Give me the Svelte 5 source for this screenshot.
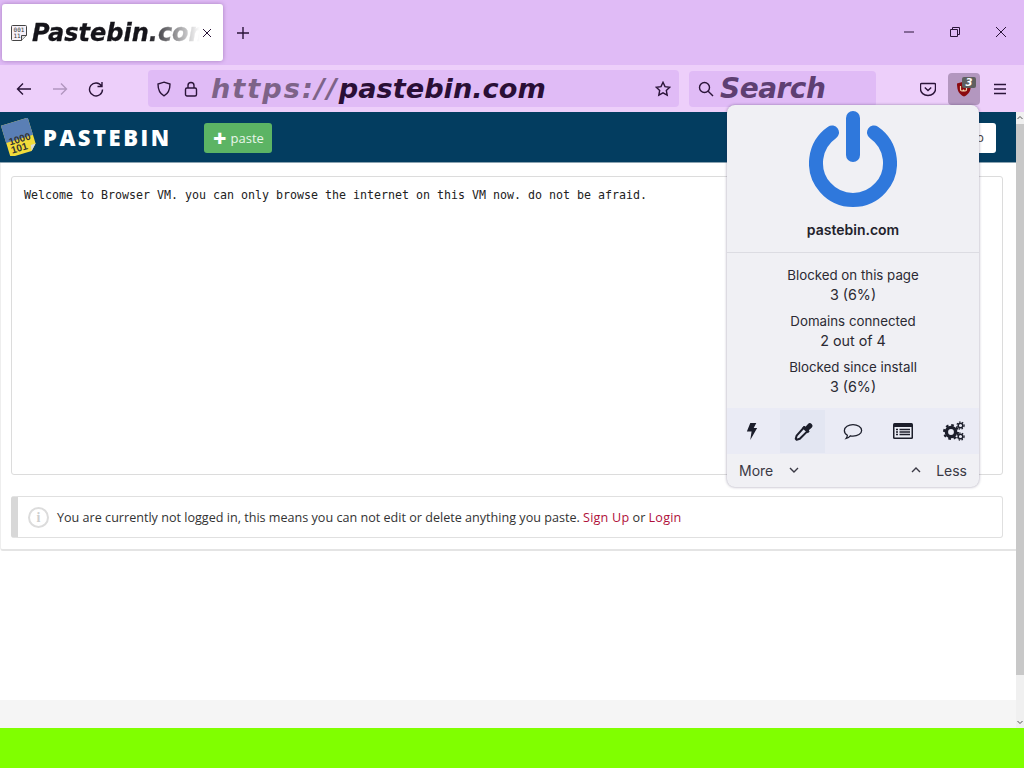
<script>
	const stats = [
		{ label: 'Blocked on this page', value: '3 (6%)' },
		{ label: 'Domains connected', value: '2 out of 4' },
		{ label: 'Blocked since install', value: '3 (6%)' }
	];
</script>

<div class="screen">
	<div class="browser">
		<div class="tabbar">
			<div class="tab">
				<svg class="favicon" viewBox="0 0 16 16" width="16" height="16">
					<path d="M.5 1.500a1 1 0 0 1 1-1h13a1 1 0 0 1 1 1v9l-5 5h-9a1 1 0 0 1-1-1z" fill="#f6f1f8" stroke="#444" />
					<path d="M10.500 15.500v-5h5" fill="#ddd" stroke="#444" />
					<text x="8" y="6.500" text-anchor="middle" class="fav-text">001</text>
					<text x="6" y="13" text-anchor="middle" class="fav-text">11</text>
				</svg>
				<span class="tab-title">Pastebin.com</span>
				<svg class="tab-close" viewBox="0 0 10 10" width="10" height="10"><path d="M1 1l8 8M9 1l-8 8" /></svg>
			</div>
			<svg class="newtab" viewBox="0 0 12 12" width="12" height="12"><path d="M6 0v12M0 6h12" /></svg>
			<div class="window-btns">
				<svg viewBox="0 0 10 10" width="10" height="10"><path d="M0 5h10" /></svg>
				<svg viewBox="0 0 10 10" width="10" height="10"><path d="M.5 2.500h7v7h-7zM2.500 2.500v-2h7v7h-2" /></svg>
				<svg viewBox="0 0 10 10" width="10" height="10"><path d="M0 0l10 10M10 0L0 10" /></svg>
			</div>
		</div>

		<div class="toolbar">
			<svg class="tool" viewBox="0 0 16 16" width="16" height="16"><path d="M15 8H1.500M7 2.500L1.500 8 7 13.500" /></svg>
			<svg class="tool dim" viewBox="0 0 16 16" width="16" height="16"><path d="M1 8h13.500M9 2.500L14.500 8 9 13.500" /></svg>
			<svg class="tool" viewBox="0 0 16 16" width="16" height="16"><path d="M13.500 5A6.500 6.500 0 1 0 14.500 8.500M14 1v4.500H9.500" /></svg>
			<div class="urlbar">
				<svg class="tool" viewBox="0 0 16 16" width="16" height="16"><path d="M8 1.200L14 3c0 6-1.500 9.500-6 11.800C3.500 12.500 2 9 2 3z" /></svg>
				<svg class="tool" viewBox="0 0 14 16" width="14" height="16"><rect x="1.500" y="7" width="11" height="8" rx="1.500" /><path d="M4 7V4.500a3 3 0 0 1 6 0V7" /></svg>
				<span class="url"><span class="scheme">https://</span>pastebin.com</span>
				<svg class="tool star" viewBox="0 0 16 16" width="16" height="16"><path d="M8 1.300l2 4.300 4.700.6-3.400 3.200.9 4.700L8 11.800l-4.200 2.300.9-4.700L1.300 6.200 6 5.600z" /></svg>
			</div>
			<div class="searchbar">
				<svg class="tool" viewBox="0 0 16 16" width="16" height="16"><circle cx="6.500" cy="6.500" r="5" /><path d="M10.200 10.200L15 15" /></svg>
				<span class="search-text">Search</span>
			</div>
			<svg class="tool pocket" viewBox="0 0 16 16" width="16" height="16"><path d="M1.500 2.500h13a1 1 0 0 1 1 1V8a7.500 6.500 0 0 1-15 0V3.500a1 1 0 0 1 1-1z" /><path d="M4.800 6.500L8 9.500l3.200-3" /></svg>
			<div class="ublock">
				<svg viewBox="0 0 16 16" width="16" height="16"><path d="M8 .5l7 2c0 7-2 11-7 13-5-2-7-6-7-13z" fill="#8b0a0f" /><path d="M4.500 5v3.500a1.500 1.500 0 0 0 3 0 1.500 1.500 0 0 0 3 0V5.500" fill="none" stroke="#f4d9b0" stroke-width="1.200" /></svg>
				<span class="badge">3</span>
			</div>
			<svg class="tool menu" viewBox="0 0 14 12" width="14" height="12"><path d="M1 1.500h12M1 6h12M1 10.500h12" /></svg>
		</div>
	</div>

	<div class="page">
		<div class="scroll-area">
			<header class="site-header">
				<svg class="logo" viewBox="0 0 38 38" width="38" height="38">
					<g transform="rotate(-17 19 19)">
						<path d="M5 3h28v27l-6 6H5z" fill="#f2db3a" />
						<path d="M5 3h28v18H5z" fill="#5a7fb5" />
						<text x="19" y="24.500" text-anchor="middle" class="logo-num">1000</text>
						<text x="16" y="33" text-anchor="middle" class="logo-num">101</text>
						<path d="M27 36l1-6 5 0z" fill="#d8d8d8" />
					</g>
				</svg>
				<span class="wordmark">PASTEBIN</span>
				<div class="paste-btn"><span class="plus">+</span> paste</div>
				<div class="login-btn">p</div>
			</header>

			<main class="content">
				<div class="paste-box">Welcome to Browser VM. you can only browse the internet on this VM now. do not be afraid.</div>
				<div class="notice">
					<span class="info">i</span>
					<span>You are currently not logged in, this means you can not edit or delete anything you paste. <a href="#a">Sign Up</a> or <a href="#a">Login</a></span>
				</div>
			</main>
			<div class="spacer"></div>
			<div class="footer"></div>
		</div>
		<div class="scrollbar">
			<svg viewBox="0 0 8 8" width="8" height="8"><path d="M1.500 5L4 2.500 6.500 5" /></svg>
			<div class="thumb"></div>
			<svg viewBox="0 0 8 8" width="8" height="8"><path d="M1.500 3L4 5.500 6.500 3" /></svg>
		</div>
	</div>

	<div class="greenbar"></div>

	<div class="popup">
		<svg class="power" viewBox="0 0 88 103" width="88" height="103">
			<path d="M23 27.500A37 37 0 1 0 65 27.500" fill="none" stroke="#2f78dc" stroke-width="14" stroke-linecap="round" />
			<path d="M44 13v37" fill="none" stroke="#2f78dc" stroke-width="14" stroke-linecap="round" />
		</svg>
		<div class="hostname">pastebin.com</div>
		<div class="stats">
			{#each stats as s}
				<div class="stat">
					<div class="stat-label">{s.label}</div>
					<div class="stat-value">{s.value}</div>
				</div>
			{/each}
		</div>
		<div class="tools">
			<div class="tool-cell">
				<svg viewBox="0 0 14 22" width="12" height="19"><path d="M5 1l7 0-3 6 4 0L5 21l1.500-10L1 11z" fill="#1c1e2b" /></svg>
			</div>
			<div class="tool-cell active">
				<svg viewBox="0 0 22 22" width="20" height="20">
					<path d="M12.500 5.500l4 4-9 9-3.500 1-1-1 1-3.500z" fill="none" stroke="#1c1e2b" stroke-width="2.200" stroke-linejoin="round" />
					<path d="M10 6.500l2-2 1.500 1 3-3.300a2.800 2.800 0 0 1 4 4L17.300 9l1 1.500-2 2z" fill="#1c1e2b" />
				</svg>
			</div>
			<div class="tool-cell">
				<svg viewBox="0 0 22 18" width="20" height="17"><path d="M11 1.500c5 0 9.500 2.700 9.500 6.300S16 14 11 14c-1 0-2 0-3-.3-1 1.300-2.500 2.300-4.500 2.800.8-1 1.200-2 1.300-3.300C2.800 12 1.500 10 1.500 7.800 1.500 4.200 6 1.500 11 1.500z" fill="none" stroke="#1c1e2b" stroke-width="1.400" /></svg>
			</div>
			<div class="tool-cell">
				<svg viewBox="0 0 20 16" width="20" height="16">
					<rect width="20" height="16" rx="1.500" fill="#1c1e2b" />
					<rect x="1.500" y="4" width="17" height="10.500" fill="#eceef6" />
					<path d="M3 6.500h2M6.500 6.500h10.500M3 9h2M6.500 9h10.500M3 11.500h2M6.500 11.500h10.500" stroke="#1c1e2b" stroke-width="1.300" />
				</svg>
			</div>
			<div class="tool-cell">
				<svg viewBox="0 0 22 20" width="22" height="20">
					<circle cx="8" cy="11" r="4.600" fill="none" stroke="#1c1e2b" stroke-width="3.400" />
					<circle cx="8" cy="11" r="7" fill="none" stroke="#1c1e2b" stroke-width="2" stroke-dasharray="2.700 2.800" />
					<circle cx="17.500" cy="4.500" r="2.300" fill="none" stroke="#1c1e2b" stroke-width="1.500" />
					<circle cx="17.500" cy="4.500" r="3.600" fill="none" stroke="#1c1e2b" stroke-width="1.200" stroke-dasharray="1.500 1.500" />
					<circle cx="17.500" cy="15.500" r="2.300" fill="none" stroke="#1c1e2b" stroke-width="1.500" />
					<circle cx="17.500" cy="15.500" r="3.600" fill="none" stroke="#1c1e2b" stroke-width="1.200" stroke-dasharray="1.500 1.500" />
				</svg>
			</div>
		</div>
		<div class="more-less">
			<span>More</span>
			<svg class="chev first" viewBox="0 0 10 6" width="10" height="6"><path d="M1 1l4 4 4-4" /></svg>
			<svg class="chev last" viewBox="0 0 10 6" width="10" height="6"><path d="M1 5l4-4 4 4" /></svg>
			<span>Less</span>
		</div>
	</div>
</div>

<style>
	:global(body) {
		margin: 0;
		overflow: hidden;
	}

	.screen {
		position: relative;
		width: 1024px;
		height: 768px;
		display: flex;
		flex-direction: column;
		overflow: hidden;
		font-family: "Open Sans", sans-serif;
	}

	.browser {
		flex: none;
		color: #1f0a30;
	}

	.tabbar {
		height: 65px;
		background: #e0bbf6;
		display: flex;
		align-items: flex-start;
		box-sizing: border-box;
		padding: 4px 0 0 2px;
	}

	.tab {
		width: 221px;
		height: 57px;
		background: #fff;
		border-radius: 3px;
		box-shadow: 0 0 4px rgba(60, 20, 90, 0.35);
		display: flex;
		align-items: center;
		box-sizing: border-box;
		padding: 0 0 0 9px;
	}

	.favicon {
		flex: none;
	}

	.fav-text {
		font-family: "DejaVu Sans Mono", monospace;
		font-size: 6px;
		fill: #333;
	}

	.tab-title {
		font-family: "DejaVu Sans", sans-serif;
		font-weight: 700;
		font-style: italic;
		font-size: 24px;
		-webkit-text-stroke: 0.3px #15141a;
		margin-left: 5px;
		width: 168px;
		overflow: hidden;
		white-space: nowrap;
		color: #15141a;
		mask-image: linear-gradient(to right, #000 68%, transparent 100%);
	}

	.tab-close {
		flex: none;
		margin-left: 2px;
	}

	.tab-close path,
	.newtab path,
	.window-btns path {
		fill: none;
		stroke: #2a1438;
		stroke-width: 1;
	}

	.newtab {
		margin: 23px 0 0 14px;
		flex: none;
	}

	.newtab path {
		stroke-width: 1.400;
	}

	.window-btns {
		margin-left: auto;
		display: flex;
		gap: 36px;
		padding: 23px 18px 0 0;
	}

	.toolbar {
		height: 47px;
		background: #edcffa;
		display: flex;
		align-items: center;
		box-sizing: border-box;
		padding: 0 0 0 16px;
	}

	.tool {
		flex: none;
	}

	.tool path,
	.tool rect,
	.tool circle {
		fill: none;
		stroke: #2a1438;
		stroke-width: 1.400;
	}

	.tool.dim {
		opacity: 0.3;
		margin-left: 20px;
	}

	.tool.dim + .tool {
		margin-left: 20px;
	}

	.urlbar {
		margin-left: 44px;
		width: 531px;
		height: 37px;
		background: #e0bbf6;
		border-radius: 4px;
		display: flex;
		align-items: center;
		box-sizing: border-box;
		padding: 0 8px;
		flex: none;
	}

	.urlbar .tool + .tool {
		margin-left: 12px;
	}

	.url {
		font-family: "DejaVu Sans", sans-serif;
		font-weight: 700;
		font-style: italic;
		font-size: 27.200px;
		margin-left: 13px;
		color: #2a0f36;
		white-space: nowrap;
	}

	.scheme {
		color: #7d6388;
		letter-spacing: 2px;
	}

	.urlbar .star {
		margin-left: auto;
	}

	.searchbar {
		margin-left: 10px;
		width: 187px;
		height: 36px;
		background: #e0bbf6;
		border-radius: 4px;
		display: flex;
		align-items: center;
		box-sizing: border-box;
		padding: 0 9px;
		flex: none;
	}

	.search-text {
		font-family: "DejaVu Sans", sans-serif;
		font-weight: 700;
		font-style: italic;
		font-size: 28px;
		margin-left: 6px;
		color: #5e3f72;
		letter-spacing: -0.5px;
	}

	.pocket {
		margin-left: 44px;
	}

	.ublock {
		margin-left: 12px;
		width: 32px;
		height: 32px;
		flex: none;
		background: #b397bf;
		border-radius: 4px;
		display: flex;
		align-items: center;
		justify-content: center;
		position: relative;
	}

	.badge {
		position: absolute;
		top: 4px;
		right: 4px;
		width: 14px;
		height: 11px;
		background: #5f5f5f;
		border-radius: 2px;
		color: #fff;
		font-family: "DejaVu Sans", sans-serif;
		font-weight: 700;
		font-style: italic;
		font-size: 10px;
		line-height: 11px;
		text-align: center;
	}

	.menu {
		margin-left: 13px;
	}

	.page {
		flex: 1;
		display: flex;
		min-height: 0;
		background: #fff;
	}

	.scroll-area {
		flex: 1;
		display: flex;
		flex-direction: column;
		min-width: 0;
	}

	.site-header {
		height: 50px;
		flex: none;
		background: #033d60;
		border-bottom: 1px solid #8ba3b1;
		display: flex;
		align-items: center;
		position: relative;
	}

	.logo {
		flex: none;
	}

	.logo-num {
		font-family: "Liberation Sans", sans-serif;
		font-weight: 700;
		font-size: 10px;
		fill: #333;
	}

	.wordmark {
		font-family: "Open Sans", sans-serif;
		font-weight: 800;
		font-size: 22px;
		letter-spacing: 2.500px;
		color: #fff;
		margin-left: 5px;
	}

	.paste-btn {
		margin-left: 33px;
		margin-top: 2px;
		width: 68px;
		height: 30px;
		background: #5cb464;
		border-radius: 3px;
		color: #e9f6ea;
		font-size: 13px;
		display: flex;
		align-items: center;
		justify-content: center;
		gap: 4px;
		box-sizing: border-box;
	}

	.plus {
		font-weight: 800;
		font-size: 23px;
		line-height: 20px;
		color: #fff;
	}

	.login-btn {
		position: absolute;
		right: 20px;
		top: 11px;
		width: 40px;
		height: 30px;
		background: #fff;
		border-radius: 3px;
		color: #444;
		font-size: 13px;
		line-height: 28px;
		text-align: right;
		box-sizing: border-box;
		padding-right: 12px;
	}

	.content {
		flex: none;
		height: 388px;
		box-sizing: border-box;
		padding: 13px 13px 0 10px;
		border-bottom: 2px solid #e4e4e4;
		border-left: 1px solid #eee;
		border-radius: 0 0 0 3px;
		display: flex;
		flex-direction: column;
		gap: 21px;
	}

	.paste-box {
		height: 299px;
		flex: none;
		box-sizing: border-box;
		border: 1px solid #dcdcdc;
		border-radius: 3px;
		padding: 11px 12px;
		font-family: "DejaVu Sans Mono", monospace;
		font-size: 11.630px;
		line-height: 15px;
		color: #222;
	}

	.notice {
		height: 42px;
		flex: none;
		box-sizing: border-box;
		border: 1px solid #e0e0e0;
		border-left: 7px solid #d8d8d8;
		border-radius: 3px;
		display: flex;
		align-items: center;
		padding-left: 10px;
		gap: 8px;
		font-size: 12.600px;
		color: #333;
		white-space: nowrap;
	}

	.notice a {
		color: #b0103a;
		text-decoration: none;
		letter-spacing: 0.2px;
	}

	.info {
		width: 17px;
		height: 17px;
		flex: none;
		border: 2px solid #dcdcdc;
		border-radius: 50%;
		color: #cfcfcf;
		font-family: "Liberation Serif", serif;
		font-weight: 700;
		font-size: 14px;
		line-height: 17px;
		text-align: center;
	}

	.spacer {
		flex: 1;
	}

	.footer {
		height: 28px;
		flex: none;
		background: #f5f5f5;
	}

	.scrollbar {
		width: 8px;
		flex: none;
		background: #f0f0f0;
		display: flex;
		flex-direction: column;
	}

	.scrollbar svg {
		flex: none;
		margin: 2px 0;
	}

	.scrollbar path {
		fill: none;
		stroke: #555;
		stroke-width: 1;
	}

	.thumb {
		height: 551px;
		background: #c8c8c8;
		margin-bottom: auto;
	}

	.greenbar {
		height: 40px;
		flex: none;
		background: #80ff00;
	}

	.popup {
		position: absolute;
		left: 727px;
		top: 105px;
		width: 252px;
		height: 382px;
		background: #f0f0f4;
		border-radius: 8px;
		box-shadow: 0 0 3px rgba(40, 30, 70, 0.45);
		display: flex;
		flex-direction: column;
		font-family: Inter, sans-serif;
		color: #2b2a33;
	}

	.power {
		flex: none;
		align-self: center;
	}

	.hostname {
		text-align: center;
		font-weight: 600;
		font-size: 14px;
		line-height: 17px;
		margin-top: 13px;
		padding-bottom: 14px;
		border-bottom: 1px solid #dcdce2;
		color: #23222b;
	}

	.stats {
		margin-top: 13px;
		display: flex;
		flex-direction: column;
		gap: 7px;
		text-align: center;
	}

	.stat-label {
		font-size: 13.300px;
		line-height: 18px;
	}

	.stat-value {
		font-size: 14.300px;
		line-height: 21px;
	}

	.tools {
		margin-top: 11px;
		height: 46px;
		background: #eaebf5;
		display: grid;
		grid-template-columns: repeat(5, 1fr);
		align-items: stretch;
		flex: none;
	}

	.tool-cell {
		display: flex;
		align-items: center;
		justify-content: center;
	}

	.tool-cell.active {
		background: #e3e6f2;
		margin: 2px 3px 1px;
	}

	.more-less {
		display: flex;
		align-items: center;
		padding: 0 12px;
		height: 32px;
		font-size: 14px;
		color: #3a3944;
	}

	.chev path {
		fill: none;
		stroke: #3a3944;
		stroke-width: 1.400;
	}

	.chev.first {
		margin-left: 16px;
	}

	.chev.last {
		margin-left: auto;
		margin-right: 15px;
	}
</style>
